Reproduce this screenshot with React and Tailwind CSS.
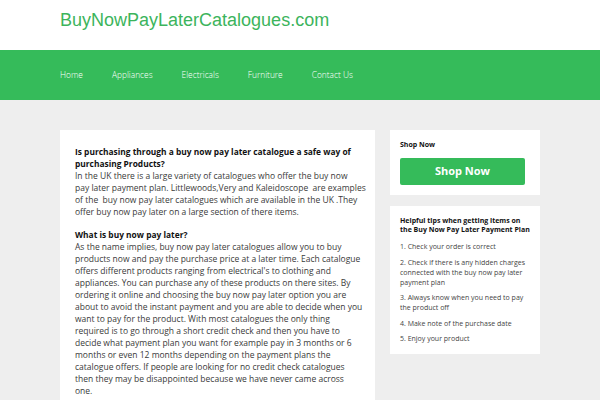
import React from "react";

const navItems = ["Home", "Appliances", "Electricals", "Furniture", "Contact Us"];

const tips = [
  "1. Check your order is correct",
  "2. Check if there is any hidden charges connected with the buy now pay later payment plan",
  "3. Always know when you need to pay the product off",
  "4. Make note of the purchase date",
  "5. Enjoy your product",
];

const intro = [
  "In the UK there is a large variety of catalogues who offer the buy now",
  "pay later payment plan. Littlewoods,Very and Kaleidoscope\u00a0 are examples",
  "of the\u00a0 buy now pay later catalogues which are available in the UK .They",
  "offer buy now pay later on a large section of there items.",
];

const body = [
  "As the name implies, buy now pay later catalogues allow you to buy",
  "products now and pay the purchase price at a later time. Each catalogue",
  "offers different products ranging from electrical's to clothing and",
  "appliances. You can purchase any of these products on there sites. By",
  "ordering it online and choosing the buy now pay later option you are",
  "about to avoid the instant payment and you are able to decide when you",
  "want to pay for the product. With most catalogues the only thing",
  "required is to go through a short credit check and then you have to",
  "decide what payment plan you want for example pay in 3 months or 6",
  "months or even 12 months depending on the payment plans the",
  "catalogue offers. If people are looking for no credit check catalogues",
  "then they may be disappointed because we have never came across",
  "one.",
];

const App = () => {
  return (
    <div className="min-h-screen bg-[#eeeeee] font-['Open_Sans',sans-serif]">
      {/* Header */}
      <header className="bg-white h-[50px]">
        <div className="w-[480px] ml-[60px] pt-[9px]">
          <h1 className="text-[18px] leading-[22px] text-[#3cb45c] font-['Liberation_Sans',sans-serif]">
            BuyNowPayLaterCatalogues.com
          </h1>
        </div>
      </header>

      {/* Nav */}
      <nav className="bg-[#35bb5a] h-[50px]">
        <ul className="ml-[60px] flex gap-[29px] pt-[19px] text-white text-[8.4px] leading-[12px] font-light">
          {navItems.map((item) => (
            <li key={item}>{item}</li>
          ))}
        </ul>
      </nav>

      {/* Content */}
      <div className="ml-[60px] w-[480px] pt-[30px] flex gap-[15px] items-start">
        <main className="w-[315px] bg-white pl-[15px] pr-[8px] pt-[16px] pb-[20px]">
          <h2 className="text-[8.4px] leading-[12px] font-bold text-[#111]">
            Is purchasing through a buy now pay later catalogue a safe way of purchasing Products?
          </h2>
          <p className="text-[8.5px] leading-[12px] text-[#3a3a3a]">
            {intro.map((line) => (
              <span key={line} className="block whitespace-nowrap">
                {line}
              </span>
            ))}
          </p>
          <h2 className="mt-[11px] text-[8.4px] leading-[12px] font-bold text-[#111]">
            What is buy now pay later?
          </h2>
          <p className="text-[8.5px] leading-[12px] text-[#3a3a3a]">
            {body.map((line) => (
              <span key={line} className="block whitespace-nowrap">
                {line}
              </span>
            ))}
          </p>
        </main>

        <aside className="w-[150px] flex flex-col gap-[11px]">
          <div className="bg-white px-[10px] pt-[10px] pb-[10px]">
            <h3 className="text-[7px] leading-[10px] font-bold text-[#111]">Shop Now</h3>
            <button className="mt-[8px] w-[125px] h-[27px] bg-[#35bb5a] rounded-[2px] text-white text-[11px] font-bold">
              Shop Now
            </button>
          </div>
          <div className="bg-white px-[10px] pt-[10px] pb-[10px]">
            <h3 className="text-[7px] leading-[9px] font-bold text-[#111]">
              Helpful tips when getting items on the Buy Now Pay Later Payment Plan
            </h3>
            <ul className="mt-[8px] flex flex-col gap-[5.5px] text-[7px] leading-[10px] text-[#444]">
              {tips.map((t) => (
                <li key={t}>{t}</li>
              ))}
            </ul>
          </div>
        </aside>
      </div>
    </div>
  );
};

export default App;
